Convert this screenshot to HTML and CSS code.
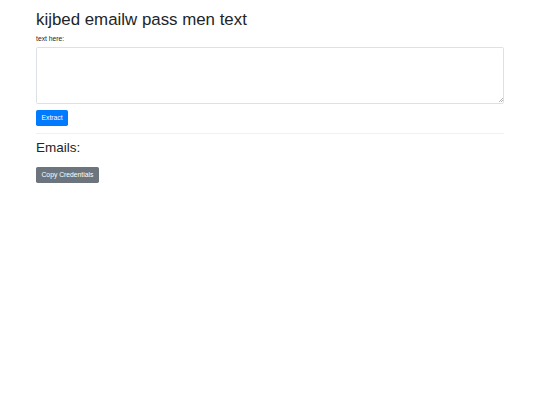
FILE: index.html
```html
<!DOCTYPE html>
<html>
<head>
<meta charset="utf-8">
<link rel="stylesheet" href="styles.css">
</head>
<body>
<div class="container">
  <h1 class="title">kijbed emailw pass men text</h1>
  <label class="label" for="txt">text here:</label>
  <div class="field">
    <textarea id="txt" class="input"></textarea>
  </div>
  <button class="btn btn-primary">Extract</button>
  <hr class="rule">
  <h2 class="subtitle">Emails:</h2>
  <button class="btn btn-secondary">Copy Credentials</button>
</div>
</body>
</html>
```
FILE: styles.css
```css
html, body {
  margin: 0;
  padding: 0;
  background: #fff;
}
body {
  font-family: "Liberation Sans", Arial, sans-serif;
  color: #212529;
  font-size: 6.75px;
  line-height: 1.5;
}
.container {
  padding: 10.1px 36px 0;
  display: flex;
  flex-direction: column;
  align-items: flex-start;
}
.title {
  font-size: 16.875px;
  font-weight: 400;
  line-height: 20.25px;
  margin: 0 0 3.4px;
}
.label {
  font-size: 6.75px;
  line-height: 10.1px;
  margin-bottom: 3.4px;
  display: block;
  color: #212529;
}
.field {
  position: relative;
  align-self: stretch;
  height: 56.5px;
}
.field::after {
  content: "";
  position: absolute;
  right: 1.5px;
  bottom: 1.5px;
  width: 4px;
  height: 4px;
  background: linear-gradient(135deg, transparent 50%, #b5b5b5 50%, #b5b5b5 62%, transparent 62%, transparent 75%, #b5b5b5 75%, #b5b5b5 87%, transparent 87%);
}
.input {
  display: block;
  box-sizing: border-box;
  width: 100%;
  height: 100%;
  margin: 0;
  border: 1px solid #dde1e5;
  border-radius: 1.7px;
  font-family: inherit;
  font-size: 6.75px;
  padding: 2.5px 5px;
  resize: none;
}
.btn {
  margin-top: 6.3px;
  font-family: inherit;
  font-size: 6.75px;
  line-height: 10.1px;
  padding: 2.95px 5.5px;
  border: 0;
  border-radius: 1.7px;
  color: #fff;
}
.btn-primary {
  background: #007bff;
}
.btn-secondary {
  margin-top: 6.5px;
  background: #6c757d;
}
.rule {
  align-self: stretch;
  margin: 6.75px 0;
  border: 0;
  border-top: 1px solid rgba(0, 0, 0, 0.06);
  height: 0;
}
.subtitle {
  font-size: 13.5px;
  font-weight: 400;
  line-height: 16.2px;
  margin: 0 0 3.4px;
}
```
